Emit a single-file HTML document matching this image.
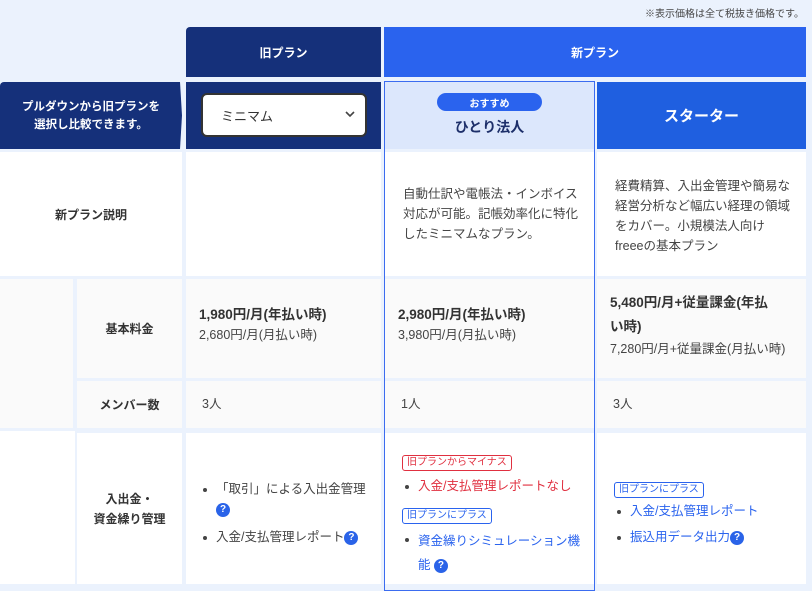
<!DOCTYPE html><html><head><meta charset="utf-8"><style>
*{box-sizing:border-box;margin:0;padding:0}
body{width:812px;height:584px;overflow:hidden;background:#ebf2fd;font-family:"Liberation Sans","Noto Sans CJK JP",sans-serif;color:#333;position:relative}
.a{position:absolute}
.c{display:flex;align-items:center;justify-content:center;text-align:center}
.w{background:#fff}.g{background:#fafafa}
.lbl{font-size:12px;font-weight:bold;color:#333}
.t{font-size:12.5px;line-height:20px;color:#444}
.q{display:inline-block;width:14px;height:14px;border-radius:50%;background:#2a63e8;color:#fff;font-size:10px;font-weight:bold;line-height:14px;text-align:center;vertical-align:middle}
.tag{display:inline-block;font-size:10px;line-height:14px;padding:0 4px;border:1px solid;border-radius:3px;background:#fff}
ul{list-style:none}
li{position:relative;padding-left:16px;font-size:12.5px;line-height:20px}
li:before{content:"";position:absolute;left:3px;top:9px;width:4px;height:4px;border-radius:50%;background:#444}
</style></head><body>
<div class="a" style="right:8px;top:5px;font-size:10px;color:#444">※表示価格は全て税抜き価格です。</div>
<div class="a c" style="left:186px;top:27px;width:195px;height:50px;background:#15307a;color:#fff;font-size:12px;font-weight:bold;border-radius:4px 0 0 0">旧プラン</div>
<div class="a c" style="left:384px;top:27px;width:422px;height:50px;background:#2a63ee;color:#fff;font-size:12px;font-weight:bold">新プラン</div>
<div class="a c" style="left:0;top:82px;width:182px;height:67px;background:#15307a;color:#fff;font-size:11.5px;font-weight:bold;line-height:18px;border-radius:4px 0 0 0;clip-path:polygon(0 0,180px 0,182px 50%,180px 100%,0 100%)">プルダウンから旧プランを<br>選択し比較できます。</div>
<div class="a" style="left:186px;top:82px;width:195px;height:67px;background:#15307a"></div>
<div class="a" style="left:201px;top:93px;width:166px;height:44px;background:#fff;border:2px solid #333;border-radius:6px;font-size:13px;color:#333;padding:11px 0 0 18px">ミニマム<svg style="position:absolute;right:10px;top:16px" width="10" height="7" viewBox="0 0 10 7"><path d="M1 1l4 4 4-4" fill="none" stroke="#444" stroke-width="1.6"/></svg></div>
<div class="a" style="left:385px;top:82px;width:209px;height:67px;background:#dce7fc"></div>
<div class="a c" style="left:437px;top:93px;width:105px;height:18px;background:#2a63ee;color:#fff;font-size:10px;font-weight:bold;border-radius:9px">おすすめ</div>
<div class="a c" style="left:385px;top:116px;width:209px;height:22px;font-size:14px;font-weight:bold;color:#1d2f6a">ひとり法人</div>
<div class="a c" style="left:597px;top:82px;width:209px;height:67px;background:#1f5fe0;color:#fff;font-size:15px;font-weight:bold">スターター</div>
<div class="a c w lbl" style="left:0;top:152px;width:182px;height:124px">新プラン説明</div>
<div class="a w" style="left:186px;top:152px;width:195px;height:124px"></div>
<div class="a w t" style="left:385px;top:152px;width:209px;height:124px;padding:32px 0 0 18px">自動仕訳や電帳法・インボイス<br>対応が可能。記帳効率化に特化<br>したミニマムなプラン。</div>
<div class="a w t" style="left:597px;top:152px;width:209px;height:124px;padding:24px 0 0 18px">経費精算、入出金管理や簡易な<br>経営分析など幅広い経理の領域<br>をカバー。小規模法人向け<br>freeeの基本プラン</div>
<div class="a g" style="left:0;top:279px;width:73px;height:149px"></div>
<div class="a c g lbl" style="left:77px;top:279px;width:105px;height:99px">基本料金</div>
<div class="a g" style="left:186px;top:279px;width:195px;height:99px;padding:26px 0 0 13px"><div style="font-size:13.5px;font-weight:bold;line-height:20px">1,980円/月(年払い時)</div><div class="t">2,680円/月(月払い時)</div></div>
<div class="a g" style="left:385px;top:279px;width:209px;height:99px;padding:26px 0 0 13px"><div style="font-size:13.5px;font-weight:bold;line-height:20px">2,980円/月(年払い時)</div><div class="t">3,980円/月(月払い時)</div></div>
<div class="a g" style="left:597px;top:279px;width:209px;height:99px;padding:12px 0 0 13px"><div style="font-size:13.5px;font-weight:bold;line-height:24px">5,480円/月+従量課金(年払<br>い時)</div><div class="t">7,280円/月+従量課金(月払い時)</div></div>
<div class="a c g lbl" style="left:77px;top:381px;width:105px;height:47px">メンバー数</div>
<div class="a g t" style="left:186px;top:381px;width:195px;height:47px;padding:13px 0 0 16px">3人</div>
<div class="a g t" style="left:385px;top:381px;width:209px;height:47px;padding:13px 0 0 16px">1人</div>
<div class="a g t" style="left:597px;top:381px;width:209px;height:47px;padding:13px 0 0 16px">3人</div>
<div class="a w" style="left:0;top:431px;width:75px;height:153px"></div>
<div class="a c w lbl" style="left:77px;top:433px;width:105px;height:151px;line-height:20px">入出金・<br>資金繰り管理</div>
<div class="a w" style="left:186px;top:433px;width:195px;height:151px;padding:46px 8px 0 14px"><ul style="color:#444"><li>「取引」による入出金管理<br><span class="q">?</span></li><li style="margin-top:8px">入金/支払管理レポート<span class="q">?</span></li></ul></div>
<div class="a w" style="left:385px;top:433px;width:209px;height:151px;padding:19px 6px 0 17px"><span class="tag" style="color:#e03040;border-color:#e03040">旧プランからマイナス</span><ul style="margin-top:5px"><li style="color:#e03040">入金/支払管理レポートなし</li></ul><span class="tag" style="color:#2a63ee;border-color:#2a63ee;margin-top:12px">旧プランにプラス</span><ul style="margin-top:5px;color:#2a63ee"><li style="line-height:24px">資金繰りシミュレーション機<br>能 <span class="q">?</span></li></ul></div>
<div class="a w" style="left:597px;top:433px;width:209px;height:151px;padding:46px 6px 0 17px"><span class="tag" style="color:#2a63ee;border-color:#2a63ee">旧プランにプラス</span><ul style="margin-top:3px;color:#2a63ee"><li>入金/支払管理レポート</li><li style="margin-top:6px">振込用データ出力<span class="q">?</span></li></ul></div>
<div class="a" style="left:384px;top:81px;width:211px;height:510px;border:1px solid #3b6cf0"></div>
</body></html>
